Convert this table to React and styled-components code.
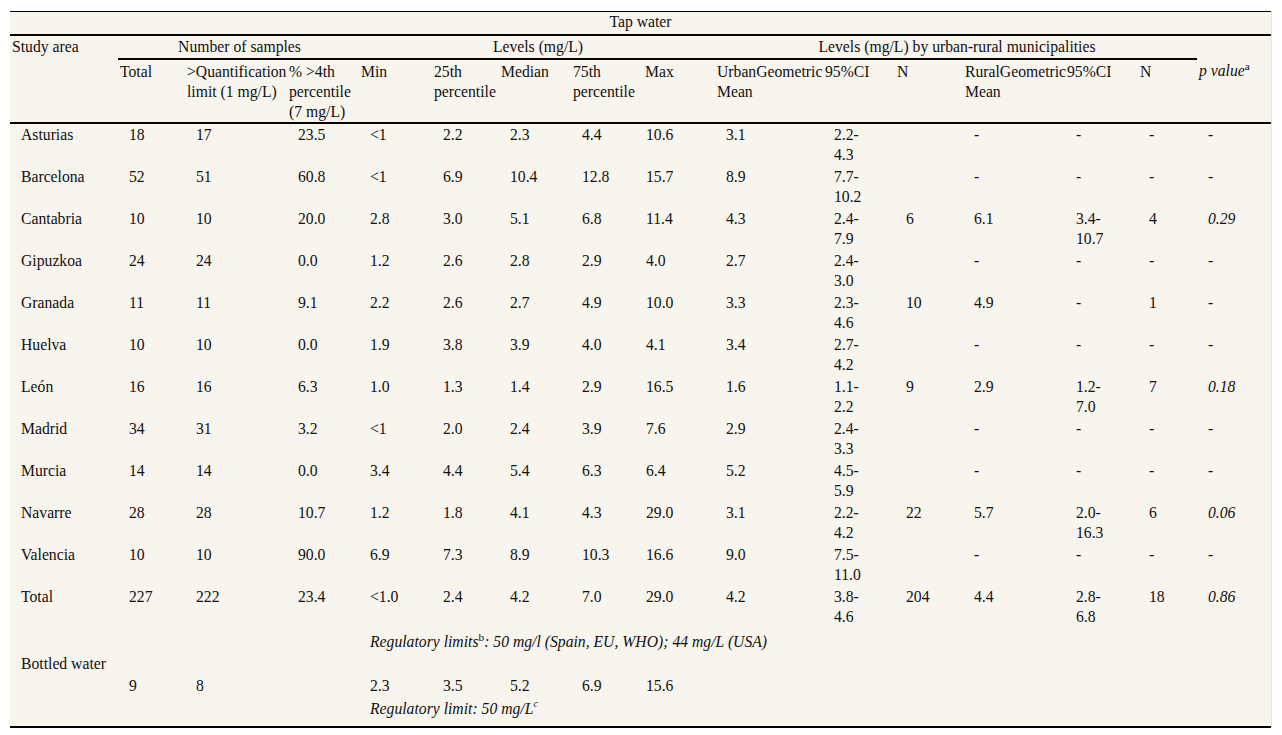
import React from 'react'
import styled, { createGlobalStyle } from 'styled-components'

const GlobalStyle = createGlobalStyle`
  body {
    margin: 0;
    background: #ffffff;
    font-family: "Liberation Serif", "Times New Roman", serif;
    color: #111111;
  }
`

const Wrapper = styled.div`
  padding: 11px 11px 12px 10px;
`

const Table = styled.table`
  width: 1261px;
  table-layout: fixed;
  border-collapse: collapse;
  background: #f8f5ef;
  border-top: 1px solid #000;
  border-bottom: 2px solid #000;
  box-shadow: 1px 0 0 #e6e4e0;
  font-size: 15.7px;
  line-height: 20px;
`

const HeadRow = styled.tr`
  border-bottom: ${p => (p.$rule ? '2px solid #000' : 'none')};
`

const Th = styled.th`
  font-weight: normal;
  text-align: ${p => (p.$center ? 'center' : 'left')};
  vertical-align: top;
  padding: ${p => p.$pad || '1px 0 1px 2px'};
  white-space: nowrap;
  border-bottom: ${p => (p.$rule ? '2px solid #000' : 'none')};
`

const SubTh = styled(Th)`
  white-space: normal;
  padding: 2px 0 0 2px;
  font-style: ${p => (p.$italic ? 'italic' : 'normal')};
`

const Td = styled.td`
  vertical-align: top;
  padding: ${p => p.$pad || `1px 2px 1px ${p.$indent ?? 11}px`};
  white-space: pre-line;
  font-style: ${p => (p.$italic ? 'italic' : 'normal')};
`

const Sup = styled.sup`
  font-size: 0.72em;
  line-height: 0;
  vertical-align: ${p => p.$raise || '0.5em'};
  font-style: normal;
`

const SupItalic = styled(Sup)`
  font-style: italic;
  font-size: 0.62em;
`

const widths = [108, 67, 102, 72, 73, 67, 72, 72, 72, 108, 72, 68, 102, 73, 59, 74]

// the Max column sits flush under its heading
const indentFor = i => (i === 8 ? 3 : 11)

const rows = [
  ['Asturias', '18', '17', '23.5', '<1', '2.2', '2.3', '4.4', '10.6', '3.1', '2.2-\n4.3', '', '-', '-', '-', '-'],
  ['Barcelona', '52', '51', '60.8', '<1', '6.9', '10.4', '12.8', '15.7', '8.9', '7.7-\n10.2', '', '-', '-', '-', '-'],
  ['Cantabria', '10', '10', '20.0', '2.8', '3.0', '5.1', '6.8', '11.4', '4.3', '2.4-\n7.9', '6', '6.1', '3.4-\n10.7', '4', '0.29'],
  ['Gipuzkoa', '24', '24', '0.0', '1.2', '2.6', '2.8', '2.9', '4.0', '2.7', '2.4-\n3.0', '', '-', '-', '-', '-'],
  ['Granada', '11', '11', '9.1', '2.2', '2.6', '2.7', '4.9', '10.0', '3.3', '2.3-\n4.6', '10', '4.9', '-', '1', '-'],
  ['Huelva', '10', '10', '0.0', '1.9', '3.8', '3.9', '4.0', '4.1', '3.4', '2.7-\n4.2', '', '-', '-', '-', '-'],
  ['León', '16', '16', '6.3', '1.0', '1.3', '1.4', '2.9', '16.5', '1.6', '1.1-\n2.2', '9', '2.9', '1.2-\n7.0', '7', '0.18'],
  ['Madrid', '34', '31', '3.2', '<1', '2.0', '2.4', '3.9', '7.6', '2.9', '2.4-\n3.3', '', '-', '-', '-', '-'],
  ['Murcia', '14', '14', '0.0', '3.4', '4.4', '5.4', '6.3', '6.4', '5.2', '4.5-\n5.9', '', '-', '-', '-', '-'],
  ['Navarre', '28', '28', '10.7', '1.2', '1.8', '4.1', '4.3', '29.0', '3.1', '2.2-\n4.2', '22', '5.7', '2.0-\n16.3', '6', '0.06'],
  ['Valencia', '10', '10', '90.0', '6.9', '7.3', '8.9', '10.3', '16.6', '9.0', '7.5-\n11.0', '', '-', '-', '-', '-'],
  ['Total', '227', '222', '23.4', '<1.0', '2.4', '4.2', '7.0', '29.0', '4.2', '3.8-\n4.6', '204', '4.4', '2.8-\n6.8', '18', '0.86']
]

const subHeads = [
  'Total',
  '>Quantification limit (1 mg/L)',
  '% >4th percentile (7 mg/L)',
  'Min',
  '25th percentile',
  'Median',
  '75th percentile',
  'Max',
  'UrbanGeometric Mean',
  '95%CI',
  'N',
  'RuralGeometric Mean',
  '95%CI',
  'N'
]

const bottled = ['', '9', '8', '', '2.3', '3.5', '5.2', '6.9', '15.6']

export default function App() {
  return (
    <Wrapper>
      <GlobalStyle />
      <Table>
        <colgroup>
          {widths.map((w, i) => (
            <col key={i} style={{ width: w }} />
          ))}
        </colgroup>
        <thead>
          <HeadRow $rule>
            <Th colSpan={16} $center $pad="0 0 2px 0">
              Tap water
            </Th>
          </HeadRow>
          <tr>
            <Th>Study area</Th>
            <Th colSpan={3} $center $rule>
              Number of samples
            </Th>
            <Th colSpan={5} $center $rule>
              Levels (mg/L)
            </Th>
            <Th colSpan={6} $center $rule>
              Levels (mg/L) by urban-rural municipalities
            </Th>
            <Th />
          </tr>
          <HeadRow $rule>
            <SubTh />
            {subHeads.map((h, i) => (
              <SubTh key={i}>{h}</SubTh>
            ))}
            <SubTh $italic>
              p value<Sup>a</Sup>
            </SubTh>
          </HeadRow>
        </thead>
        <tbody>
          {rows.map(r => (
            <tr key={r[0]}>
              {r.map((v, i) => (
                <Td key={i} $indent={indentFor(i)} $italic={i === 15 && v !== '-'}>
                  {v}
                </Td>
              ))}
            </tr>
          ))}
          <tr>
            <Td colSpan={4} $pad="4px 2px 1px 11px" />
            <Td colSpan={12} $italic $pad="4px 2px 1px 11px">
              Regulatory limits<Sup>b</Sup>: 50 mg/l (Spain, EU, WHO); 44 mg/L (USA)
            </Td>
          </tr>
          <tr>
            <Td colSpan={16}>Bottled water</Td>
          </tr>
          <tr>
            {bottled.map((v, i) => (
              <Td key={i} $indent={indentFor(i)}>
                {v}
              </Td>
            ))}
            <Td colSpan={7} />
          </tr>
          <tr>
            <Td colSpan={4} $pad="2px 2px 7px 11px" />
            <Td colSpan={12} $italic $pad="2px 2px 7px 11px">
              Regulatory limit: 50 mg/L<SupItalic $raise="0.7em">c</SupItalic>
            </Td>
          </tr>
        </tbody>
      </Table>
    </Wrapper>
  )
}
